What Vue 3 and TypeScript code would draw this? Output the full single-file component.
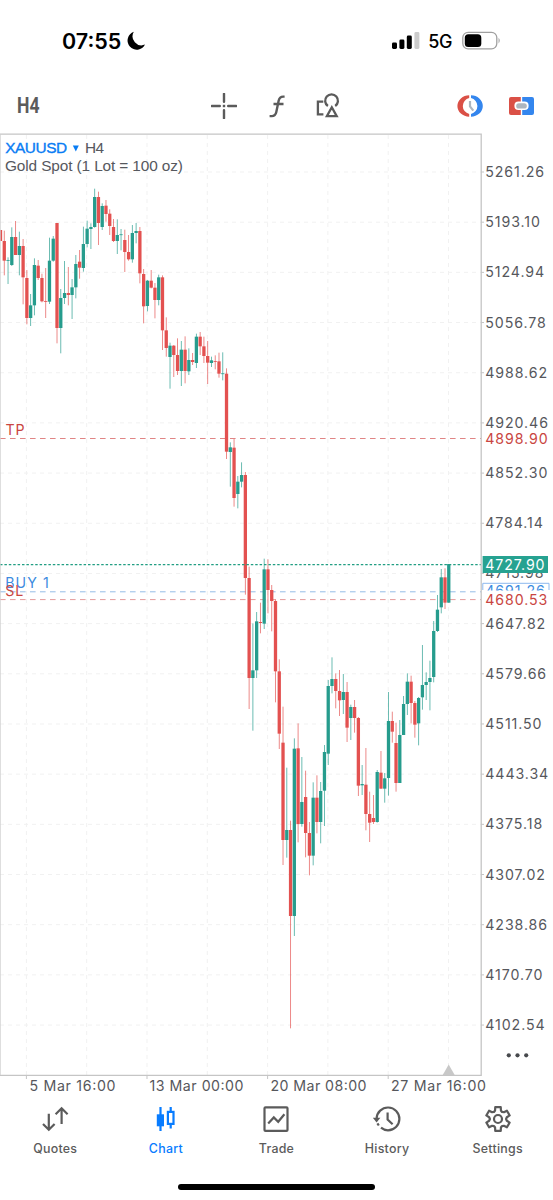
<script setup lang="ts">
type Dir = 'u' | 'd'
// direction, high, body top, body bottom, low (thirds of a pixel below the group's y)
type Group = { y: number; rows: [Dir, number, number, number, number][] }

const groups: Group[] = [
  { y: 180, rows: [
    ['d', 150, 150, 183, 183], ['d', 152, 183, 242, 286], ['u', 232, 240, 242, 312], ['u', 142, 171, 255, 258],
    ['d', 123, 171, 225, 225], ['u', 155, 198, 225, 286], ['d', 177, 198, 292, 373], ['d', 270, 294, 414, 433],
    ['u', 342, 376, 414, 438], ['u', 235, 255, 376, 406], ['d', 240, 257, 294, 300], ['d', 281, 294, 364, 367],
    ['d', 264, 363, 365, 414], ['u', 173, 242, 365, 372], ['u', 168, 176, 242, 245], ['d', 129, 129, 444, 490],
    ['u', 327, 354, 444, 520], ['u', 243, 339, 354, 372], ['d', 261, 339, 345, 376], ['u', 297, 322, 345, 417],
    ['u', 225, 252, 322, 355], ['d', 210, 245, 263, 296], ['u', 140, 192, 264, 275], ['u', 122, 146, 192, 202],
    ['u', 130, 141, 147, 207], ['u', 26, 51, 141, 143], ['d', 35, 51, 129, 195], ['u', 70, 78, 141, 150],
    ['d', 60, 77, 102, 125], ['d', 88, 101, 138, 165], ['d', 117, 141, 183, 186], ['u', 118, 165, 183, 222],
    ['u', 147, 163, 165, 211], ['d', 149, 180, 216, 276], ['d', 165, 216, 238, 242], ['u', 135, 159, 238, 248],
    ['u', 129, 153, 159, 190], ['d', 141, 153, 280, 310], ['d', 267, 282, 379, 430], ['u', 300, 302, 378, 394],
    ['d', 270, 302, 323, 325], ['d', 309, 323, 360, 415], ['u', 284, 292, 360, 376], ['d', 286, 292, 451, 510],
    ['d', 412, 451, 504, 530], ['u', 488, 497, 531, 626], ['d', 495, 497, 525, 591], ['d', 475, 525, 573, 585],
    ['u', 483, 509, 573, 618], ['d', 469, 509, 573, 610], ['u', 505, 540, 574, 585], ['d', 519, 540, 546, 555],
    ['u', 461, 470, 549, 564], ['d', 456, 470, 499, 525], ['d', 470, 499, 528, 549], ['d', 483, 528, 548, 612],
    ['u', 530, 541, 549, 561], ['d', 526, 543, 545, 568], ['d', 518, 544, 581, 593], ['u', 517, 580, 582, 601],
  ] },
  { y: 360, rows: [
    ['d', 25, 41, 275, 297], ['u', 247, 262, 276, 380], ['d', 237, 263, 414, 440], ['u', 348, 365, 402, 445],
    ['u', 307, 345, 365, 382], ['d', 336, 345, 654, 704],
  ] },
  { y: 530, rows: [
    ['d', 110, 144, 444, 537], ['u', 280, 421, 444, 602], ['u', 246, 274, 421, 444], ['d', 218, 276, 279, 310],
    ['u', 86, 118, 281, 297], ['d', 88, 118, 180, 250], ['d', 165, 180, 213, 304], ['d', 208, 213, 424, 517],
    ['d', 388, 424, 611, 657],
  ] },
  { y: 690, rows: [
    ['d', 50, 158, 450, 525], ['u', 233, 420, 450, 503], ['d', 392, 420, 678, 1015], ['u', 145, 176, 678, 738],
    ['d', 100, 175, 402, 457], ['u', 201, 336, 402, 410], ['d', 242, 321, 429, 502], ['d', 396, 429, 497, 556],
    ['u', 277, 323, 497, 526], ['d', 256, 323, 396, 430], ['u', 276, 303, 396, 460], ['u', 165, 186, 302, 408],
    ['u', -30, -12, 191, 225], ['u', -98, -33, -12, 10], ['d', -50, -33, 3, 55], ['d', -60, 3, 31, 78],
  ] },
  { y: 640, rows: [
    ['u', 102, 156, 180, 222], ['d', 126, 156, 263, 306], ['u', 194, 201, 234, 300], ['d', 180, 201, 234, 278],
    ['d', 231, 234, 437, 468], ['u', 375, 432, 436, 465], ['d', 324, 434, 522, 571], ['d', 455, 522, 548, 606],
    ['d', 465, 534, 546, 552], ['u', 390, 396, 546, 548], ['d', 333, 398, 446, 446], ['u', 399, 415, 446, 488],
    ['u', 156, 243, 414, 467], ['d', 215, 243, 275, 308], ['d', 248, 309, 429, 455], ['u', 240, 285, 429, 429],
    ['u', 168, 192, 285, 285], ['u', 100, 125, 192, 225], ['d', 107, 125, 189, 250], ['d', 183, 189, 254, 293],
    ['u', 171, 174, 250, 316], ['u', 15, 135, 172, 209], ['u', 97, 126, 135, 180], ['u', 62, 114, 126, 211],
    ['u', -57, -27, 111, 127],
  ] },
  { y: 530, rows: [
    ['u', 195, 239, 303, 306], ['u', 117, 142, 232, 250], ['d', 115, 142, 218, 237], ['u', 102, 102, 218, 218],
  ] },
]

const TOP = 133
const candles = groups
  .flatMap(g => g.rows.map(([dir, h, t, b, l]) => ({
    dir, h: g.y + h / 3 - TOP, t: g.y + t / 3 - TOP, b: g.y + b / 3 - TOP, l: g.y + l / 3 - TOP,
  })))
  .map((c, i) => ({ ...c, x: 0.5 + i * 3.767 }))

const prices = ['5261.26', '5193.10', '5124.94', '5056.78', '4988.62', '4920.46', '4852.30', '4784.14', '4715.98',
  '4647.82', '4579.66', '4511.50', '4443.34', '4375.18', '4307.02', '4238.86', '4170.70', '4102.54']
const priceRows = prices.map((label, i) => ({ label, y: 39 + i * 50.18 }))
const columns = Array.from({ length: 8 }, (_, i) => 26.4 + i * 60.3)
const dates = [
  { label: '5 Mar 16:00', x: 29.5, w: 86 },
  { label: '13 Mar 00:00', x: 149.5, w: 94 },
  { label: '20 Mar 08:00', x: 270.5, w: 96 },
  { label: '27 Mar 16:00', x: 391, w: 95 },
]
const tabs = ['Quotes', 'Chart', 'Trade', 'History', 'Settings']
const gear = (() => {
  const pts: string[] = []
  for (let i = 0; i < 6; i++) {
    const spots: [number, number][] = [[-13, 12.2], [13, 12.2], [19, 9], [30, 8.1], [41, 9]]
    for (const [a, r] of spots) {
      const t = ((i * 60 + a - 90) * Math.PI) / 180
      pts.push(`${(14 + r * Math.cos(t)).toFixed(2)},${(14 + r * Math.sin(t)).toFixed(2)}`)
    }
  }
  return pts.join(' ')
})()
</script>

<template>
  <main class="screen">
    <header class="status">
      <div class="clock">
        <span>07:55</span>
        <svg width="19" height="20" viewBox="0 0 19 20"><path d="M6.8 .8A9.2 9.2 0 1 0 18 13.6 9 9 0 0 1 6.8 .8Z" fill="#000" /></svg>
      </div>
      <div class="signals">
        <svg width="28" height="18" viewBox="0 0 28 18">
          <rect x="0" y="10.5" width="5" height="6.5" rx="1.4" /><rect x="7.4" y="7.5" width="5" height="9.5" rx="1.4" />
          <rect x="14.8" y="3.5" width="5" height="13.5" rx="1.4" /><rect x="22.4" y="0" width="5" height="17" rx="1.4" fill="#ccc" />
        </svg>
        <span>5G</span>
        <svg width="40" height="20" viewBox="0 0 40 20">
          <rect x=".8" y="1.3" width="34" height="16.6" rx="5.3" fill="none" stroke="#a0a0a0" stroke-width="1.3" />
          <rect x="2.8" y="3.3" width="16.5" height="12.6" rx="3.5" /><path d="M36.5 6.8q2.6 2.7 0 5.6z" fill="#aaa" />
        </svg>
      </div>
    </header>

    <nav class="tools">
      <span class="period">H4</span>
      <div class="middle">
        <svg width="26" height="26" viewBox="0 0 26 26"><path d="M13 .8v8M13 17.2v8M.8 13h8M17.2 13h8" stroke="#5b5b5b" stroke-width="2.4" stroke-linecap="round" /><rect x="11.8" y="11.8" width="2.4" height="2.4" fill="#5b5b5b" /></svg>
        <svg width="18" height="26" viewBox="0 0 18 26"><path d="M16.6 3.6h-1.4c-2.8 0-3.9 1.3-4.5 4L8.3 19c-.6 2.8-1.6 4.1-4.5 4.1H1.6M5.5 11h10" fill="none" stroke="#5b5b5b" stroke-width="2.4" /></svg>
        <svg width="24" height="26" viewBox="0 0 24 26"><path d="M7.3 8.6H1.9v12.7h5.5M11.9 13A6.4 6.4 0 1 1 19.2 13M15.8 14.3l4.9 8.8H10.9Z" fill="none" stroke="#5b5b5b" stroke-width="2.3" /></svg>
      </div>
      <div class="right">
        <svg width="26" height="22" viewBox="0 0 26 22">
          <path d="M12.2 .3A11.8 10.7 0 0 0 12.2 21.7V19A8.2 8.2 0 0 1 12.2 3Z" fill="#da5046" /><path d="M14 .3a11.8 10.7 0 0 1 0 21.4V19a8.2 8.2 0 0 0 0-16Z" fill="#3486ee" />
          <path d="M13 6v5.4l3.3 4.2" fill="none" stroke="#adb6bf" stroke-width="2.2" />
        </svg>
        <svg width="25" height="18" viewBox="0 0 25 18">
          <path d="M2 0h9.8v4.6H9.4a4 4 0 0 0-4 4v.4a4 4 0 0 0 4 4h2.4V18H2a2 2 0 0 1-2-2V2a2 2 0 0 1 2-2Z" fill="#da5046" /><path d="M23 0h-9.8v4.6h2.4a4 4 0 0 1 4 4v.4a4 4 0 0 1-4 4h-2.4V18H23a2 2 0 0 0 2-2V2a2 2 0 0 0-2-2Z" fill="#3486ee" />
          <rect x="7.2" y="6.3" width="10.6" height="5.2" rx="2.6" fill="#adb6bf" />
        </svg>
      </div>
    </nav>

    <section class="chart">
      <svg class="plot" width="553" height="967" viewBox="0 0 553 967">
        <g class="grid">
          <path v-for="r in priceRows" :key="r.label" :d="`M0 ${r.y}H481`" />
          <path v-for="x in columns" :key="x" :d="`M${x} 2V942`" />
        </g>
        <path d="M448.7 931.5l6 10.5h-12z" fill="#c8c8c8" />
        <g fill="none" stroke-width="1">
          <path d="M0 305.5H481" stroke="#e08585" stroke-dasharray="5.6 4.4" />
          <path d="M0 458.8H481" stroke="#94bce6" stroke-dasharray="5.6 4.4" />
          <path d="M0 466.6H481" stroke="#e59a9a" stroke-dasharray="5.6 4.4" />
        </g>
        <g v-for="c in candles" :key="c.x" :class="c.dir">
          <rect class="wick" :x="c.x - 0.45" :y="c.h" width="0.9" :height="c.l - c.h" />
          <rect :x="c.x - 1.65" :y="c.t" width="3.3" :height="Math.max(c.b - c.t, 0.8)" />
        </g>
        <path d="M0 431.6H481" stroke="#229e83" stroke-width="1.3" stroke-dasharray="2.5 1.9" />
        <path d="M0 1.2H481.2V942.3H0" fill="none" stroke="#c5c5c5" stroke-width="1.3" />
        <path d="M.4 1V942" stroke="#d0d0d0" stroke-width=".8" />
        <path v-for="x in [26.4, 147, 267.6, 388.2]" :key="x" :d="`M${x} 942v4`" stroke="#c5c5c5" />
        <g class="axis">
          <template v-for="r in priceRows" :key="r.label">
            <path :d="`M481 ${r.y}h3`" stroke="#c5c5c5" />
            <text x="485.3" :y="r.y + 5">{{ r.label }}</text>
          </template>
          <text v-for="d in dates" :key="d.label" class="fit" :x="d.x" y="957.6" :textLength="d.w" lengthAdjust="spacing">{{ d.label }}</text>
          <rect x="482.5" y="450" width="70" height="8" fill="#fff" />
          <path d="M482.8 457V450.3H549V457" fill="none" stroke="#8db8ee" />
          <text x="485.3" y="463.4" class="blue">4691.26</text>
          <rect x="482.5" y="457.5" width="70" height="16.5" fill="#fff" />
          <text x="485.3" y="471.6" class="red">4680.53</text>
          <text x="485.3" y="310.7" class="red">4898.90</text>
          <rect x="482.6" y="423" width="65.4" height="17" fill="#26a291" />
          <text x="485.3" y="436.7" class="white">4727.90</text>
          <text x="5.5" y="301.7" class="red fit" textLength="19">TP</text>
          <text x="5.2" y="454.6" class="blue fit" textLength="43.5">BUY 1</text>
          <text x="5.2" y="462.6" class="red fit" textLength="18">SL</text>
        </g>
        <g class="title">
          <text x="5.2" y="19.5" textLength="62" class="symbol">XAUUSD</text>
          <path d="M72.8 12.5h6l-3 6z" fill="#087cf4" />
          <text x="85" y="19.5" textLength="19">H4</text>
          <text x="5" y="38" textLength="178">Gold Spot (1 Lot = 100 oz)</text>
        </g>
        <g fill="#47494d"><circle cx="508.8" cy="922.3" r="2.1" /><circle cx="517.5" cy="922.3" r="2.1" /><circle cx="526.2" cy="922.3" r="2.1" /></g>
      </svg>
    </section>

    <nav class="tabs">
      <div v-for="(tab, i) in tabs" :key="tab" class="tab" :class="{ active: i === 1 }">
        <svg width="28" height="28" viewBox="0 0 28 28" fill="none" stroke="currentColor" stroke-width="2.2">
          <path v-if="i === 0" d="M7.8 8.7v16M2 19l5.8 5.8L13.6 19M20.6 19V3.4M14.6 9.3l6-6 6 6" />
          <g v-else-if="i === 1"><path d="M8.5 2v24M18.7 2v5M18.7 18.5v5" /><rect x="4.8" y="9.3" width="7.2" height="12" fill="currentColor" stroke="none" /><rect x="15.9" y="6.9" width="5.6" height="12" /></g>
          <g v-else-if="i === 2"><rect x="2.5" y="2.3" width="23" height="23.6" rx="1" /><path d="M6.2 18.5l5.6-6.1 4.4 4.4 6.2-7.6" /></g>
          <g v-else-if="i === 3"><path d="M3.6 13.5A11.4 11.4 0 1 1 15 25.3a11 11 0 0 1-7-2.6M4.4 18.3l1.4 2.2M14.6 7.5v7l5 4.8" /><path d="M-.2 12.8h7.6l-3.8 4.7z" fill="currentColor" stroke="none" /></g>
          <g v-else><polygon :points="gear" stroke-linejoin="round" /><circle cx="14" cy="14" r="4" /></g>
        </svg>
        <span>{{ tab }}</span>
      </div>
    </nav>
    <div class="home"></div>
  </main>
</template>

<style>
body { margin: 0; background: #fff; }
</style>

<style scoped>
.screen { width: 553px; height: 1200px; display: flex; flex-direction: column; background: #fff; overflow: hidden; font-family: Inter, "Liberation Sans", sans-serif; color: #5b5b5b; }
svg { display: block; flex: none; }
.status { height: 83px; box-sizing: border-box; padding: 30px 51px 0 62px; display: flex; justify-content: space-between; color: #000; }
.clock, .signals { display: flex; align-items: center; height: 22px; }
.clock { gap: 6px; font-size: 21.5px; font-weight: 600; letter-spacing: 0; }
.signals span { margin: 0 10px 0 8px; font-size: 18px; font-weight: 500; letter-spacing: -0.4px; }
.tools { height: 50px; display: grid; grid-template-columns: 211px 1fr 96px; align-items: center; }
.tools > * { position: relative; top: -2.5px; }
.period { padding-left: 17px; font: 700 22px Roboto, sans-serif; transform: scaleX(.8); transform-origin: 17px 0; }
.middle { display: flex; gap: 30.5px; }
.right { display: flex; align-items: center; gap: 26px; }
.chart { height: 967px; flex: none; }
.grid path { stroke: #f1f1f1; stroke-width: 1; stroke-dasharray: 4 4; }
.u { fill: #269c8d; }
.d { fill: #e35150; }
.wick { opacity: .75; }
.axis { font: 14.2px Inter, "Liberation Sans", sans-serif; fill: #56575c; letter-spacing: .9px; }
.fit { letter-spacing: 0; }
.red { fill: #c94541; }
.blue { fill: #3c8be0; }
.white { fill: #fff; }
.title { font: 15.4px "Liberation Sans", Arial, sans-serif; fill: #56585e; }
.symbol { fill: #087cf4; stroke: #087cf4; stroke-width: .35px; }
.tabs { display: grid; grid-template-columns: repeat(5, 110.6px); height: 72px; }
.tab { display: flex; flex-direction: column; align-items: center; padding-top: 5px; gap: 7.5px; font-size: 12.4px; font-weight: 500; letter-spacing: .25px; line-height: 16px; }
.active { color: #087cff; }
.home { width: 197px; height: 6px; margin: 12px auto 0; border-radius: 3px; background: #000; }
</style>
